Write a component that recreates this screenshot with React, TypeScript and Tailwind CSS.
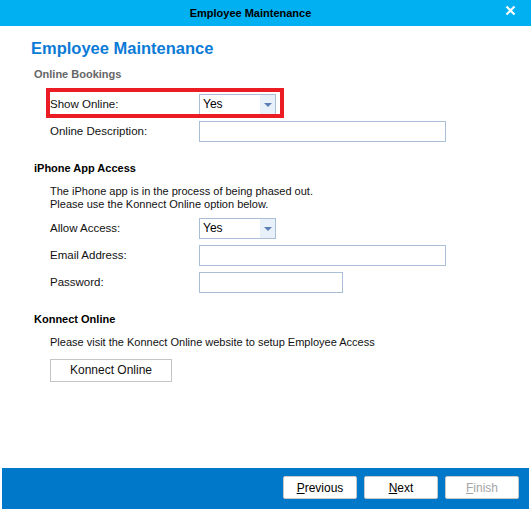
import React from 'react';

const font = { fontFamily: '"Liberation Sans", Arial, sans-serif' };

const Select: React.FC<{ value: string }> = ({ value }) => (
    <div className="flex h-[21px] w-[77px] border border-[#abbed8] bg-white">
        <div className="flex-1 pl-[3px] text-[12px] leading-[19px] text-black">{value}</div>
        <div className="flex w-[15px] items-center justify-center bg-[#e8f0fa]">
            <svg width="8" height="4" viewBox="0 0 8 4">
                <path d="M0 0 H8 L4 4 Z" fill="#5b7fb4" />
            </svg>
        </div>
    </div>
);

const TextBox: React.FC<{ width: string }> = ({ width }) => (
    <div className={`h-[21px] border border-[#abbed8] bg-white ${width}`} />
);

const Row: React.FC<{ label: string; children: React.ReactNode }> = ({ label, children }) => (
    <div className="flex h-[21px] items-center">
        <div className="w-[149px] text-[11.5px] text-[#111]">{label}</div>
        {children}
    </div>
);

const FooterButton: React.FC<{ first: string; rest: string; disabled?: boolean }> = ({ first, rest, disabled }) => (
    <button
        className={`h-[23px] w-[74px] rounded-[2px] border border-[#c8c8c8] bg-white text-[12px] ${disabled ? 'text-[#a6a6a6]' : 'text-black'}`}
    >
        <span className="underline">{first}</span>
        {rest}
    </button>
);

export default function App() {
    return (
        <div className="flex h-[509px] w-[531px] flex-col bg-white" style={font}>
            {/* title bar */}
            <div className="relative flex h-[26px] items-center justify-center bg-[#00b0f0] pr-[30px]">
                <span className="text-[11px] font-bold text-black">Employee Maintenance</span>
                <span className="absolute right-[15px] top-[5px]">
                    <svg width="11" height="11" viewBox="0 0 11 11">
                        <path d="M1.5 1.5 L9.5 9.5 M9.5 1.5 L1.5 9.5" stroke="white" strokeWidth="2.2" />
                    </svg>
                </span>
            </div>

            <div className="flex-1 pl-[31px]">
                <h1 className="mt-[10px] text-[16.5px] font-bold leading-[24px] text-[#0c7bd6]">Employee Maintenance</h1>
                <div className="mt-[6px] pl-[3px] text-[11px] font-bold leading-[16px] text-[#666]">Online Bookings</div>

                <div className="mt-[12px] flex flex-col gap-[6px] pl-[19px]">
                    <div className="relative">
                        <Row label="Show Online:">
                            <Select value="Yes" />
                        </Row>
                        <div className="pointer-events-none absolute left-[-4px] top-[-6px] h-[30px] w-[238px] border-[4px] border-[#ec1c24]" />
                    </div>
                    <Row label="Online Description:">
                        <TextBox width="w-[247px]" />
                    </Row>
                </div>

                <div className="mt-[18px] pl-[3px] text-[11px] font-bold leading-[16px] text-black">iPhone App Access</div>
                <div className="mt-[9px] pl-[19px] text-[11px] leading-[13px] text-[#111]">
                    <div>The iPhone app is in the process of being phased out.</div>
                    <div>Please use the Konnect Online option below.</div>
                </div>

                <div className="mt-[7px] flex flex-col gap-[6px] pl-[19px]">
                    <Row label="Allow Access:">
                        <Select value="Yes" />
                    </Row>
                    <Row label="Email Address:">
                        <TextBox width="w-[247px]" />
                    </Row>
                    <Row label="Password:">
                        <TextBox width="w-[144px]" />
                    </Row>
                </div>

                <div className="mt-[18px] pl-[3px] text-[11px] font-bold leading-[16px] text-black">Konnect Online</div>
                <div className="mt-[7px] pl-[19px] text-[11px] leading-[16px] text-[#111]">
                    Please visit the Konnect Online website to setup Employee Access
                </div>
                <div className="mt-[7px] pl-[19px]">
                    <button className="h-[23px] w-[122px] border border-[#c4c4c4] bg-white text-[12px] text-[#111]">
                        Konnect Online
                    </button>
                </div>
            </div>

            <div className="mx-[2px] flex h-[41px] items-start justify-end gap-[7px] bg-[#0078c9] pr-[10px] pt-[8px]">
                <FooterButton first="P" rest="revious" />
                <FooterButton first="N" rest="ext" />
                <FooterButton first="F" rest="inish" disabled />
            </div>
        </div>
    );
}
